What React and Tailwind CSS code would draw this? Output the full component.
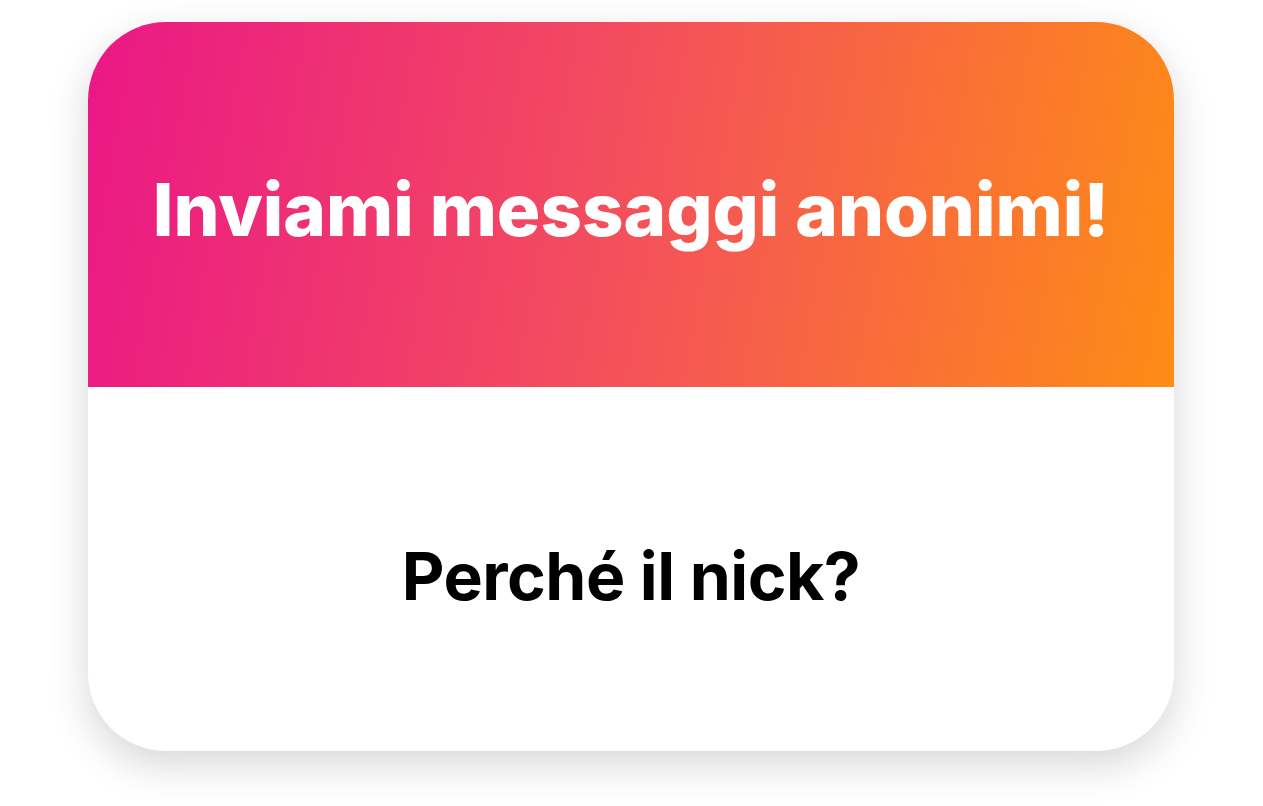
export default function App() {
    return (
        <div className="min-h-screen w-full bg-white pt-[22px] pl-[88px] font-['Inter','Liberation_Sans',sans-serif]">
            {/* Card */}
            <div className="w-[1086px] h-[729px] rounded-[78px] overflow-hidden bg-white flex flex-col shadow-[0_14px_40px_rgba(0,0,0,0.16)]">
                <div className="h-[365px] flex items-center justify-center bg-[linear-gradient(100deg,#ea1786_0%,#f4505b_50%,#fe8c15_100%)]">
                    <h1 className="text-white text-[72.5px] font-extrabold tracking-normal leading-none pt-[12px]">
                        Inviami messaggi anonimi!
                    </h1>
                </div>
                <div className="flex-1 flex items-center justify-center">
                    <p className="text-black text-[66px] font-bold tracking-[-0.5px] leading-none pt-[14px]">
                        Perché il nick?
                    </p>
                </div>
            </div>
        </div>
    );
}
